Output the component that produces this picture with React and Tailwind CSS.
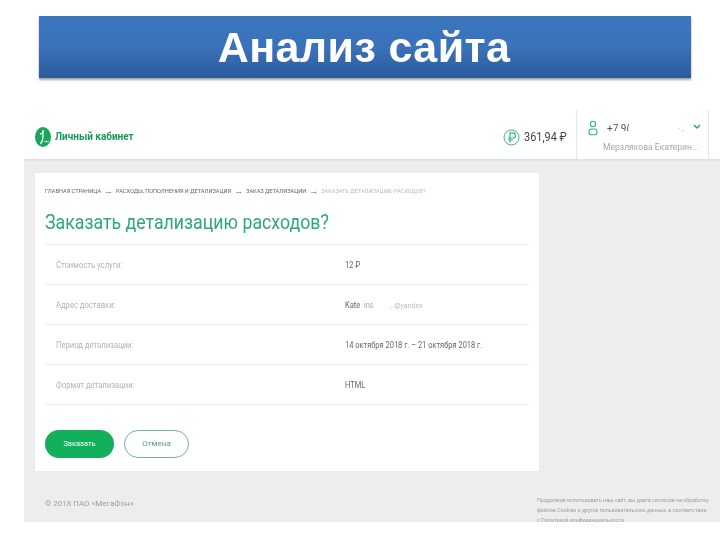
const Row = ({ label, children }) => (
  <div className="flex items-center h-[40px] pt-[1px] border-b border-[#e8e8e8]">
    <div className="w-[300px] pl-[11px] text-[#b4b4b4] text-[8.5px]"><span className="inline-block origin-left scale-x-[0.9] whitespace-nowrap">{label}</span></div>
    <div className="text-[#666] text-[8.5px]"><span className="inline-block origin-left scale-x-[0.88] whitespace-nowrap">{children}</span></div>
  </div>
);

function Logo() {
  return (
    <svg width="16" height="20" viewBox="0 0 16 20" className="shrink-0">
      <ellipse cx="8" cy="10" rx="8" ry="10" fill="#14a85a" />
      <path d="M8 3 L8 9 M5 7 Q8 7 8.5 4 M8 9 Q8 14 5.5 17" stroke="#fff" strokeWidth="1.3" fill="none" />
      <path d="M9.5 14.5h4" stroke="#fff" strokeWidth="1.6" strokeDasharray="1 .5" fill="none" />
    </svg>
  );
}

function Ruble() {
  return (
    <svg width="17" height="17" viewBox="0 0 17 17" className="shrink-0">
      <circle cx="8.5" cy="8.5" r="7.5" fill="none" stroke="#35b583" strokeWidth="1" />
      <path d="M7 13.5V3.8h2.8a2.5 2.5 0 0 1 0 5.2H5M5 11H10" fill="none" stroke="#35b583" strokeWidth="1.2" />
    </svg>
  );
}

function Person() {
  return (
    <svg width="10" height="16" viewBox="0 0 10 16" className="shrink-0">
      <circle cx="5" cy="4" r="2.7" fill="none" stroke="#35b583" strokeWidth="1.1" />
      <rect x="1" y="9" width="8" height="5.8" rx="2.6" fill="none" stroke="#35b583" strokeWidth="1.1" />
    </svg>
  );
}

export default function App() {
  return (
    <div className="w-[720px] h-[540px] bg-white overflow-hidden pt-4 font-['Liberation_Sans',sans-serif]">
      <div className="mx-[39px] w-[652px] h-[62px] flex items-center justify-center pr-[2px] pt-[1px] bg-gradient-to-b from-[#3b76c0] via-[#3a72b9] to-[#2c5a9b] shadow-[0_2px_2px_rgba(90,90,90,0.55)] blur-[0.3px]">
        <h1 className="text-white font-bold text-[43px] leading-none tracking-[0.4px]">Анализ сайта</h1>
      </div>

      <div className="ml-[24px] mt-[32px] h-[412px] flex flex-col overflow-hidden bg-[#ededed] blur-[0.4px] font-['Roboto',sans-serif]">
        <header className="h-[49px] shrink-0 bg-white flex shadow-[0_1px_2px_rgba(0,0,0,0.08)]">
          <div className="flex items-center gap-[4px] pl-[11px] pt-[5px] w-[474px]">
            <Logo />
            <span className="text-[#179a58] text-[10px] font-bold leading-none">Личный кабинет</span>
          </div>
          <div className="flex items-center gap-[4px] w-[79px] pl-[6px] pt-[5px] -ml-[1px]">
            <Ruble />
            <span className="inline-block origin-left scale-x-[0.84] text-[#444] text-[13px] whitespace-nowrap">361,94 ₽</span>
          </div>
          <div className="w-[133px] border-x border-[#e6e6e6] pl-[11px] pt-[10px]">
            <div className="flex gap-[9px]">
              <Person />
              <div className="w-[22px] h-[7px] overflow-hidden mt-[4px] text-[#555] text-[10px] leading-[10px] whitespace-nowrap">+7 9(</div>
              <div className="ml-[40px] w-[6px] h-[6px] overflow-hidden mt-[5px] text-[#888] text-[8px] leading-[8px] whitespace-nowrap">· .</div>
              <svg width="8" height="6" viewBox="0 0 8 6" className="mt-[4px]"><path d="M1 1l3 3 3-3" fill="none" stroke="#2f9e73" strokeWidth="1.5" /></svg>
            </div>
            <div className="mt-[6px] ml-[15px] text-[#a8a8a8] text-[9.5px] whitespace-nowrap leading-none origin-left scale-x-[0.9]">Мерзлякова Екатерин...</div>
          </div>
        </header>

        <main className="ml-[11px] mt-[14px] w-[504px] h-[298px] shrink-0 bg-white px-[10px] pt-[14px]">
          <nav className="flex items-center gap-[5px] text-[5.6px] text-[#666] whitespace-nowrap h-[8px]">
            <span>ГЛАВНАЯ СТРАНИЦА</span><span className="text-[9px] leading-none -mx-[2px]">→</span>
            <span>РАСХОДЫ, ПОПОЛНЕНИЯ И ДЕТАЛИЗАЦИЯ</span><span className="text-[9px] leading-none -mx-[2px]">→</span>
            <span>ЗАКАЗ ДЕТАЛИЗАЦИИ</span><span className="text-[9px] leading-none -mx-[2px]">→</span>
            <span className="text-[#bbb]">ЗАКАЗАТЬ ДЕТАЛИЗАЦИЮ РАСХОДОВ?</span>
          </nav>
          <h2 className="mt-[12px] h-[38px] text-[#2fa878] text-[21px] leading-[30px] font-normal border-b border-[#e8e8e8] whitespace-nowrap">
            <span className="inline-block origin-left scale-x-[0.845]">Заказать детализацию расходов?</span>
          </h2>
          <div>
            <Row label="Стоимость услуги:">12 ₽</Row>
            <Row label="Адрес доставки:">
              <span>Kate</span><span className="text-[#aaa]">&nbsp;&nbsp;ins</span><span className="text-[#bbb] ml-[17px] text-[8px]">...@yandex</span>
            </Row>
            <Row label="Период детализации:">14 октября 2018 г. – 21 октября 2018 г.</Row>
            <Row label="Формат детализации:">HTML</Row>
          </div>
          <div className="flex gap-[10px] mt-[25px]">
            <button className="w-[69px] h-[28px] rounded-[14px] bg-[#12b05c] text-white text-[7.5px]">Заказать</button>
            <button className="w-[65px] h-[28px] rounded-[14px] border border-[#6fb79b] text-[#5c9a83] text-[8px]">Отмена</button>
          </div>
        </main>

        <footer className="flex ml-[21px] mt-[24px] text-[#a0a0a0]">
          <div className="w-[493px] shrink-0 text-[8px] pt-[5px] leading-none">© 2018 ПАО «МегаФон»</div>
          <div className="ml-[-1px] text-[5.3px] leading-[10px] whitespace-nowrap">
            <p>Продолжая использовать наш сайт, вы даете согласие на обработку</p>
            <p>файлов Cookies и других пользовательских данных, в соответствии</p>
            <p>с Политикой конфиденциальности</p>
          </div>
        </footer>
      </div>
    </div>
  );
}
